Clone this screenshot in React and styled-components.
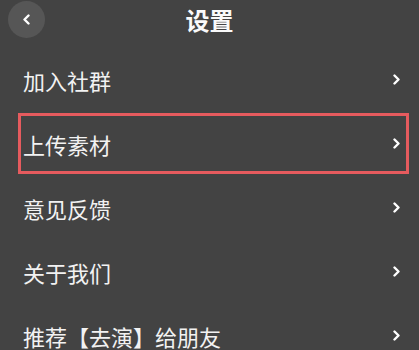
import React from "react";
import styled, { createGlobalStyle } from "styled-components";

const GlobalStyle = createGlobalStyle`
  html, body {
    margin: 0;
    padding: 0;
    background: #434343;
  }
  body {
    font-family: "Noto Sans CJK SC", "Noto Sans", sans-serif;
    color: #f4f4f4;
  }
`;

const Page = styled.div`
  width: 419px;
  height: 350px;
  overflow: hidden;
  background: #434343;
`;

const Header = styled.div`
  position: relative;
  height: 49px;
  display: flex;
  align-items: center;
  justify-content: center;
`;

const BackButton = styled.div`
  position: absolute;
  left: 8px;
  top: 1px;
  width: 37px;
  height: 37px;
  border-radius: 50%;
  background: #565656;
  display: flex;
  align-items: center;
  justify-content: center;
`;

const Title = styled.h1`
  margin: 0;
  margin-top: -9px;
  font-size: 24px;
  font-weight: 700;
  color: #fafafa;
  line-height: 1;
`;

const List = styled.div`
  display: flex;
  flex-direction: column;
  gap: 3px;
`;

const Row = styled.div`
  height: 61px;
  box-sizing: border-box;
  margin: 0 10px 0 18px;
  padding: 0 6px 0 2px;
  border: 3px solid ${(props) => (props.$active ? "#e65b5e" : "transparent")};
  display: flex;
  align-items: center;
  justify-content: space-between;
`;

const Label = styled.span`
  font-size: 22px;
  line-height: 1;
  color: #f2f2f2;
`;

const Chevron = ({ dir = "right", w = 7, h = 11 }) => (
  <svg width={w} height={h} viewBox="0 0 7 11" fill="none">
    <polyline
      points={dir === "right" ? "1.5,1.5 5.5,5.5 1.5,9.5" : "5.5,1.5 1.5,5.5 5.5,9.5"}
      stroke="#ffffff"
      strokeWidth="2.4"
      strokeLinecap="round"
      strokeLinejoin="round"
    />
  </svg>
);

const items = ["加入社群", "上传素材", "意见反馈", "关于我们", "推荐【去演】给朋友"];

export default function App() {
  return (
    <Page>
      <GlobalStyle />
      <Header>
        <BackButton>
          <Chevron dir="left" />
        </BackButton>
        <Title>设置</Title>
      </Header>
      <List>
        {items.map((text, i) => (
          <Row key={text} $active={i === 1}>
            <Label>{text}</Label>
            <Chevron />
          </Row>
        ))}
      </List>
    </Page>
  );
}
